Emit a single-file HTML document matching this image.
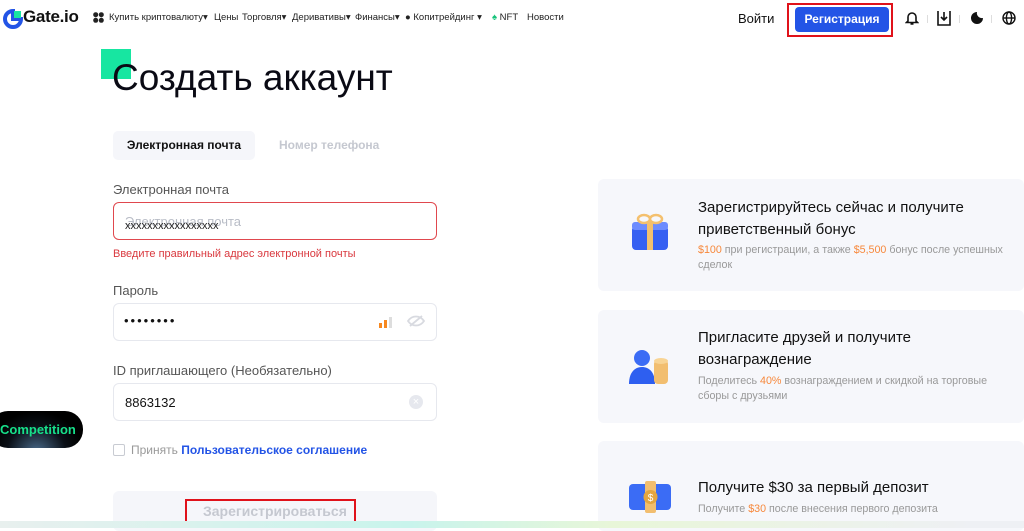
<!DOCTYPE html>
<html><head><meta charset="utf-8"><style>
*{margin:0;padding:0;box-sizing:border-box}
body{width:1024px;height:528px;overflow:hidden;background:#fff;font-family:"Liberation Sans","Noto Sans CJK SC",sans-serif;position:relative;color:#111}
.a{position:absolute;white-space:nowrap}
.nav{font-size:9.5px;color:#222;top:12px}
.inp{position:absolute;left:113px;width:324px;border:1px solid #e6e8ee;border-radius:6px}
.lbl{font-size:13px;color:#555}
.card{position:absolute;left:598px;width:426px;background:#f6f7fb;border-radius:6px}
.ct{position:absolute;left:100px;font-size:15px;color:#111;line-height:22px}
.cs{position:absolute;left:100px;font-size:10.7px;color:#999;line-height:15px}
.o{color:#f7883b}
</style></head><body>
<svg class="a" style="left:3px;top:9px" width="20" height="20" viewBox="0 0 20 20"><path d="M10 2a8 8 0 1 0 8 8h-8V2z" fill="none" stroke="#2354e6" stroke-width="4"/><rect x="11" y="2" width="7" height="7" fill="#17e6a1"/></svg>
<div class="a" style="left:23px;top:7px;font-size:17px;font-weight:bold;letter-spacing:-0.3px">Gate.io</div>
<svg class="a" style="left:93px;top:12px" width="11" height="11" viewBox="0 0 11 11"><circle cx="2.7" cy="2.7" r="2.5" fill="#222"/><circle cx="8.3" cy="2.7" r="2.5" fill="#222"/><circle cx="2.7" cy="8.3" r="2.5" fill="#222"/><circle cx="8.3" cy="8.3" r="2.5" fill="#222"/></svg>
<div class="a nav" style="left:109px">Купить криптовалюту▾</div>
<div class="a nav" style="left:214px">Цены</div>
<div class="a nav" style="left:242px">Торговля▾</div>
<div class="a nav" style="left:292px">Деривативы▾</div>
<div class="a nav" style="left:355px">Финансы▾</div>
<div class="a nav" style="left:405px">● Копитрейдинг ▾</div>
<div class="a nav" style="left:492px"><span style="color:#17c37b">♠</span> NFT</div>
<div class="a nav" style="left:527px">Новости</div>
<div class="a" style="left:738px;top:11px;font-size:13px">Войти</div>
<div class="a" style="left:787px;top:3px;width:106px;height:34px;border:2px solid #e0121b"></div>
<div class="a" style="left:795px;top:7px;width:94px;height:25px;background:#2354e6;border-radius:4px;color:#fff;font-size:12px;font-weight:bold;text-align:center;line-height:25px">Регистрация</div>
<svg class="a" style="left:905px;top:10px" width="14" height="16" viewBox="0 0 14 16"><path d="M3 11V7a4 4 0 0 1 8 0v4l1.5 1.5h-11z M5.5 14h3" fill="none" stroke="#111" stroke-width="1.6"/></svg>
<svg class="a" style="left:937px;top:10px" width="14" height="16" viewBox="0 0 14 16"><path d="M1 1v14h12V1M7 2v8M4 7l3 3 3-3" fill="none" stroke="#111" stroke-width="1.6"/></svg>
<svg class="a" style="left:970px;top:11px" width="14" height="14" viewBox="0 0 14 14"><path d="M7 1a6 6 0 1 0 6 6A5 5 0 0 1 7 1z" fill="#111"/></svg>
<svg class="a" style="left:1002px;top:11px" width="14" height="14" viewBox="0 0 14 14" fill="none" stroke="#111" stroke-width="1.4"><circle cx="7" cy="7" r="6"/><ellipse cx="7" cy="7" rx="2.6" ry="6"/><path d="M1 7h12"/></svg>
<div class="a" style="left:927px;top:15px;width:1px;height:8px;background:#ddd"></div>
<div class="a" style="left:959px;top:15px;width:1px;height:8px;background:#ddd"></div>
<div class="a" style="left:991px;top:15px;width:1px;height:8px;background:#ddd"></div>
<div class="a" style="left:101px;top:49px;width:30px;height:30px;background:#17e6a1"></div>
<div class="a" style="left:112px;top:57px;font-size:37px;color:#0a0a14">Создать аккаунт</div>
<div class="a" style="left:113px;top:131px;width:142px;height:29px;background:#f5f6fa;border-radius:5px;font-size:12px;font-weight:bold;text-align:center;line-height:29px">Электронная почта</div>
<div class="a" style="left:279px;top:138px;font-size:12px;font-weight:bold;color:#c5c8d0">Номер телефона</div>
<div class="a lbl" style="left:113px;top:182px">Электронная почта</div>
<div class="inp" style="top:202px;height:38px;border-color:#e0484e"></div>
<div class="a" style="left:125px;top:214px;font-size:13px;color:#b8bcc6">Электронная почта</div>
<div class="a" style="left:125px;top:220px;font-size:11px;color:#222">xxxxxxxxxxxxxxxxx</div>
<div class="a" style="left:113px;top:248px;font-size:11px;color:#d9383e">Введите правильный адрес электронной почты</div>
<div class="a lbl" style="left:113px;top:283px">Пароль</div>
<div class="inp" style="top:303px;height:38px"></div>
<div class="a" style="left:124px;top:313px;font-size:13px;letter-spacing:2px">••••••••</div>
<svg class="a" style="left:379px;top:316px" width="16" height="12"><rect x="0" y="7" width="3" height="5" fill="#f7881f"/><rect x="5" y="4" width="3" height="8" fill="#f7881f"/><rect x="10" y="1" width="3" height="11" fill="#ddd"/></svg>
<svg class="a" style="left:407px;top:314px" width="18" height="14" fill="none" stroke="#d8dae0" stroke-width="1.8"><path d="M1 7c4-6 12-6 16 0-4 6-12 6-16 0zM3 12L15 2"/></svg>
<div class="a lbl" style="left:113px;top:363px">ID приглашающего (Необязательно)</div>
<div class="inp" style="top:383px;height:38px"></div>
<div class="a" style="left:125px;top:395px;font-size:13px">8863132</div>
<div class="a" style="left:409px;top:395px;width:14px;height:14px;border-radius:50%;background:#e6e8ee;color:#fff;font-size:11px;line-height:14px;text-align:center">×</div>
<div class="a" style="left:113px;top:444px;width:12px;height:12px;border:1px solid #c8cbd2;border-radius:2px"></div>
<div class="a" style="left:131px;top:443px;font-size:12px;color:#999">Принять <span style="color:#2354e6;font-weight:bold">Пользовательское соглашение</span></div>
<div class="a" style="left:113px;top:491px;width:324px;height:40px;background:#f5f6fa;border-radius:6px"></div>
<div class="a" style="left:185px;top:499px;width:171px;height:25px;border:2px solid #e0121b"></div>
<div class="a" style="left:203px;top:503px;font-size:14px;font-weight:bold;color:#c5c8d0">Зарегистрироваться</div>
<div class="a" style="left:-10px;top:411px;width:93px;height:37px;background:radial-gradient(ellipse at 50% 110%,#4a6a8a 0,#0a0f16 45%,#000 70%);border-radius:18px;color:#17e08a;font-size:13px;font-weight:bold;line-height:37px;padding-left:10px">Competition</div>
<div class="card" style="top:179px;height:112px">
<svg class="a" style="left:32px;top:33px" width="40" height="40" viewBox="0 0 40 40"><rect x="2" y="14" width="36" height="24" rx="4" fill="#3660f2"/><rect x="2" y="10" width="36" height="8" rx="3" fill="#6d8cff"/><rect x="17" y="10" width="6" height="28" fill="#f4c06e"/><ellipse cx="14" cy="7" rx="6" ry="4" fill="none" stroke="#f4c06e" stroke-width="2.5"/><ellipse cx="26" cy="7" rx="6" ry="4" fill="none" stroke="#f4c06e" stroke-width="2.5"/></svg>
<div class="ct" style="top:18px">Зарегистрируйтесь сейчас и получите<br>приветственный бонус</div>
<div class="cs" style="top:64px"><span class="o">$100</span> при регистрации, а также <span class="o">$5,500</span> бонус после успешных<br>сделок</div>
</div>
<div class="card" style="top:310px;height:113px">
<svg class="a" style="left:30px;top:38px" width="44" height="38" viewBox="0 0 44 38"><circle cx="14" cy="10" r="8" fill="#3b6cf5"/><path d="M1 36c0-12 6-17 13-17s13 5 13 17z" fill="#2e5ff0"/><rect x="26" y="12" width="14" height="24" rx="4" fill="#f2be6f"/><ellipse cx="33" cy="13" rx="7" ry="3" fill="#f8d494"/></svg>
<div class="ct" style="top:17px">Пригласите друзей и получите<br>вознаграждение</div>
<div class="cs" style="top:64px">Поделитесь <span class="o">40%</span> вознаграждением и скидкой на торговые<br>сборы с друзьями</div>
</div>
<div class="card" style="top:441px;height:90px">
<svg class="a" style="left:30px;top:40px" width="44" height="32" viewBox="0 0 44 32"><rect x="1" y="3" width="42" height="26" rx="4" fill="#3b6cf5"/><rect x="17" y="0" width="11" height="32" rx="2" fill="#f2be6f"/><circle cx="22.5" cy="16" r="7" fill="#e5a640"/><text x="22.5" y="20" font-size="10" fill="#fff" text-anchor="middle" font-family="Liberation Sans">$</text></svg>
<div class="ct" style="top:36px">Получите $30 за первый депозит</div>
<div class="cs" style="top:61px">Получите <span class="o">$30</span> после внесения первого депозита</div>
</div>
<div class="a" style="left:0;top:521px;width:1024px;height:7px;background:linear-gradient(90deg,#e8f0ee,#c8f4ec 40%,#e8f6d8 60%,#eef0f4 95%)"></div>
</body></html>
